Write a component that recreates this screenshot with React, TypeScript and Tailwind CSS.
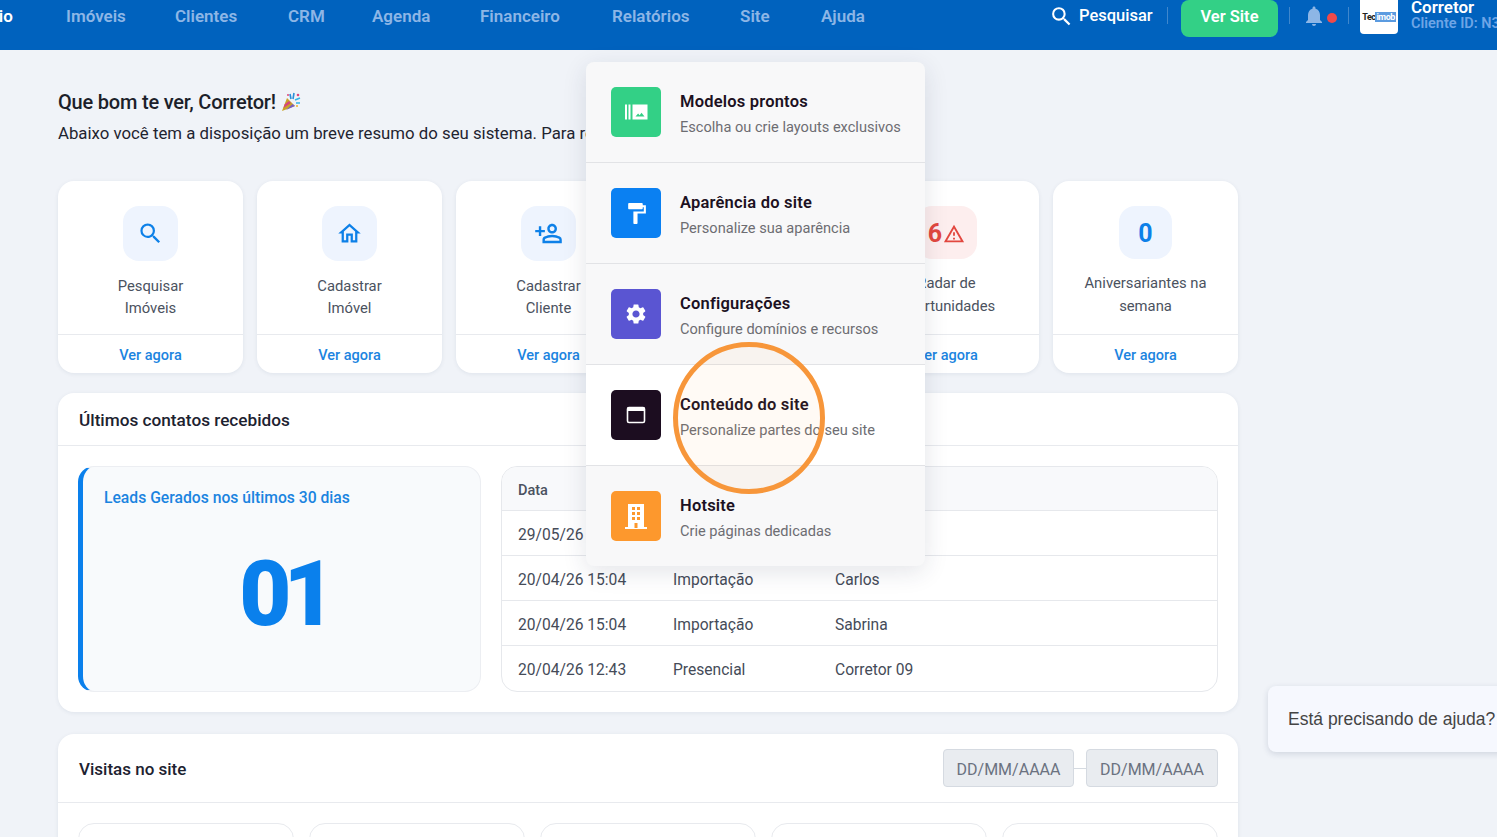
import React from "react";
import { MdSearch, MdOutlineHome, MdOutlinePersonAddAlt, MdOutlineWarningAmber, MdFormatPaint, MdSettings, MdNotifications } from "react-icons/md";

const font = "font-['Roboto',sans-serif]";

const navItems = [
  ["Imóveis", "w-[60px] mr-[49px]"],
  ["Clientes", "w-[63px] mr-[50px]"],
  ["CRM", "w-[34px] mr-[50px]"],
  ["Agenda", "w-[58px] mr-[50px]"],
  ["Financeiro", "w-[82px] mr-[50px]"],
  ["Relatórios", "w-[78px] mr-[50px]"],
  ["Site", "w-[31px] mr-[50px]"],
  ["Ajuda", "w-[44px]"],
];

function Party() {
  return (
    <svg width="20" height="20" viewBox="0 0 20 20" className="ml-[5px]">
      <path d="M1 19 L6 6 L14 14 Z" fill="#c9a227" />
      <path d="M3.6 12.5 L8 9 L10 11 L2.4 16 Z" fill="#d6457a" />
      <path d="M5 18 L11.5 12 L14 14 Z" fill="#7a5fc0" />
      <path d="M9 2 l1 5 M13 1 l-1 6" stroke="#2b8fd8" strokeWidth="1.6" />
      <path d="M14 8 l5 -2 M15 11 l4 0" stroke="#35b5e5" strokeWidth="1.6" />
      <circle cx="17" cy="3" r="1.3" fill="#e0457b" />
      <circle cx="7" cy="3" r="1" fill="#e0457b" />
      <circle cx="16" cy="14" r="1" fill="#f0b429" />
    </svg>
  );
}

function QuickCard({ icon, big, label, danger }: { icon: React.ReactNode; big?: boolean; label: string[]; danger?: boolean }) {
  return (
    <div className="h-[192px] bg-white rounded-2xl shadow-[0_1px_4px_rgba(30,50,90,0.08)] flex flex-col">
      <div className="h-[154px] border-b border-[#e8eaee] flex flex-col items-center pt-[25px]">
        <div className={`flex items-center justify-center rounded-2xl ${big ? "h-[53px] pt-[3px]" : "h-[55px] w-[55px]"} ${big && danger ? "w-[61px]" : ""} ${big && !danger ? "w-[53px]" : ""} ${danger ? "bg-[#fdeeee]" : "bg-[#eef4fe]"}`}>{icon}</div>
        <div className={`text-[14.8px] text-[#4b5260] text-center ${big ? "mt-[13px] leading-[23px]" : "mt-[14px] leading-[22px]"}`}>
          {label.map((l) => (
            <div key={l} className="whitespace-nowrap">{l}</div>
          ))}
        </div>
      </div>
      <div className="flex-1 flex items-center justify-center pt-[3px] text-[14.5px] font-medium text-[#1b84e0]">Ver agora</div>
    </div>
  );
}

function MenuRow({ color, icon, title, sub, active }: { color: string; icon: React.ReactNode; title: string; sub: string; active?: boolean }) {
  return (
    <div className={`h-[101px] flex items-center pl-[25px] gap-[19px] border-b border-[#e2e3e6] last:border-transparent ${active ? "bg-white" : ""}`}>
      <div className={`w-[50px] h-[50px] rounded-[5px] flex items-center justify-center ${color}`}>{icon}</div>
      <div className="pt-[3px]">
        <div className="text-[16.5px] leading-[22px] font-semibold text-[#1c1122] tracking-[0.2px]">{title}</div>
        <div className="text-[14.6px] leading-[20px] mt-[4px] text-[#6d6d72]">{sub}</div>
      </div>
    </div>
  );
}

const rows = [
  ["29/05/26 10:12", "Site", "Cliente"],
  ["20/04/26 15:04", "Importação", "Carlos"],
  ["20/04/26 15:04", "Importação", "Sabrina"],
  ["20/04/26 12:43", "Presencial", "Corretor 09"],
];

export default function App() {
  return (
    <div className={`relative w-[1497px] h-[837px] overflow-hidden bg-[#f0f3f8] ${font}`}>
      <header className="h-[50px] bg-[#0062be] flex items-start whitespace-nowrap">
        <div className="h-[33px] flex items-center -ml-[29px] w-[1081px] shrink-0">
          <span className="text-[17px] font-semibold text-white w-[45px] mr-[50px]">Início</span>
          {navItems.map(([n, c]) => (
            <span key={n} className={`text-[17px] font-semibold text-[#8db6e6] ${c}`}>{n}</span>
          ))}
        </div>
        <div className="flex items-start shrink-0">
          <div className="h-[33px] flex items-center w-[115px] shrink-0">
            <MdSearch className="text-white text-[25px] -ml-[3px]" />
            <span className="text-[16.5px] font-medium text-white ml-[5px]">Pesquisar</span>
          </div>
          <div className="w-px h-[17px] mt-[7px] bg-[#3f87cd] shrink-0" />
          <div className="ml-[13px] w-[97px] h-[37px] pb-[2px] bg-[#33d086] text-white text-[16.5px] font-semibold flex items-center justify-center rounded-lg shrink-0">Ver Site</div>
          <div className="ml-[11px] w-px h-[17px] mt-[7px] bg-[#3f87cd] shrink-0" />
          <MdNotifications className="text-[#8db6e6] text-[24px] ml-[12px] mt-[4px] shrink-0" />
          <div className="w-[10px] h-[10px] rounded-full bg-[#f04a4a] ml-[1px] mt-[13px] shrink-0" />
          <div className="ml-[11px] w-px h-[17px] mt-[7px] bg-[#3f87cd] shrink-0" />
          <div className="ml-[11px] w-[38px] h-[34px] bg-white rounded-b-[4px] flex flex-col items-center justify-center shrink-0">
            <div className="flex items-center text-[9px] font-bold leading-[10px] tracking-[-0.5px]">
              <span className="text-[#222]">Tec</span>
              <span className="bg-[#5b9be0] text-white px-[1px]">imob</span>
            </div>
          </div>
          <div className="ml-[13px] -mt-[2px] shrink-0">
            <div className="text-[17px] leading-[18px] font-semibold text-white">Corretor</div>
            <div className="text-[14.5px] leading-[16px] font-semibold text-[#6ea5e6]">Cliente ID: N3</div>
          </div>
        </div>
      </header>

      <main className="ml-[58px] w-[1180px] pt-[40px]">
        <div className="flex items-center h-[24px]">
          <h1 className="text-[20px] font-medium text-[#1c1f2a] tracking-[-0.2px]">Que bom te ver, Corretor!</h1>
          <Party />
        </div>
        <p className="mt-[7px] text-[16.8px] leading-[24px] text-[#1f2430] whitespace-nowrap">Abaixo você tem a disposição um breve resumo do seu sistema. Para relatórios completos acesse o menu.</p>

        <div className="mt-[36px] grid grid-cols-6 gap-x-[14px]">
          <QuickCard icon={<MdSearch className="text-[#0d80e8] text-[27px]" />} label={["Pesquisar", "Imóveis"]} />
          <QuickCard icon={<MdOutlineHome className="text-[#0d80e8] text-[27px]" />} label={["Cadastrar", "Imóvel"]} />
          <QuickCard icon={<MdOutlinePersonAddAlt className="text-[#0d80e8] text-[29px] -scale-x-100" />} label={["Cadastrar", "Cliente"]} />
          <QuickCard big icon={<span className="text-[25px] font-bold text-[#0d80e8]">0</span>} label={["Contratos", "vencendo"]} />
          <QuickCard big danger icon={<span className="flex items-center text-[#e2473f]"><span className="text-[25px] font-bold">6</span><MdOutlineWarningAmber className="text-[22px] ml-[1px]" /></span>} label={["Radar de", "Oportunidades"]} />
          <QuickCard big icon={<span className="text-[25px] font-bold text-[#0d80e8]">0</span>} label={["Aniversariantes na", "semana"]} />
        </div>

        <section className="mt-[20px] h-[319px] bg-white rounded-2xl shadow-[0_1px_4px_rgba(30,50,90,0.08)]">
          <div className="h-[53px] px-[21px] pt-[3px] flex items-center border-b border-[#e8eaee] text-[17.2px] font-medium text-[#1d2230]">Últimos contatos recebidos</div>
          <div className="pt-[20px] px-[20px] flex gap-[20px]">
            <div className="w-[403px] h-[226px] bg-[#f8fafc] rounded-2xl border border-[#eceef2] border-l-[5px] border-l-[#0a80ec] pl-[21px] pt-[21px]">
              <div className="text-[15.7px] leading-[20px] font-medium text-[#1b84e0]">Leads Gerados nos últimos 30 dias</div>
              <div className="mt-[33px] -ml-[17px] text-center text-[90px] leading-[108px] font-black tracking-[-8px] text-[#0a80ec]">01</div>
            </div>
            <div className="flex-1 h-[226px] rounded-2xl border border-[#e6e8ec] overflow-hidden">
              <div className="h-[44px] pt-[4px] bg-[#f8f9fb] border-b border-[#e6e8ec] flex items-center pl-[16px] text-[14.5px] font-medium text-[#4b5260]">Data</div>
              {rows.map((r, i) => (
                <div key={i} className={`h-[45px] pt-[5px] flex items-center pl-[16px] text-[15.6px] text-[#454b58] ${i < 3 ? "border-b border-[#e6e8ec]" : ""}`}>
                  <span className="w-[155px]">{r[0]}</span>
                  <span className="w-[162px]">{r[1]}</span>
                  <span>{r[2]}</span>
                </div>
              ))}
            </div>
          </div>
        </section>

        <section className="mt-[22px] h-[200px] bg-white rounded-2xl shadow-[0_1px_4px_rgba(30,50,90,0.08)]">
          <div className="h-[69px] pl-[21px] pr-[20px] flex items-center border-b border-[#e8eaee]">
            <span className="text-[17px] pt-[3px] font-medium text-[#1d2230] flex-1">Visitas no site</span>
            <div className="w-[131px] h-[38px] pt-[3px] rounded-[4px] bg-[#e9ecf0] border border-[#d5dae1] flex items-center justify-center text-[16px] text-[#6b7280]">DD/MM/AAAA</div>
            <div className="w-[12px] h-px bg-[#d5dae1]" />
            <div className="w-[132px] h-[38px] pt-[3px] rounded-[4px] bg-[#e9ecf0] border border-[#d5dae1] flex items-center justify-center text-[16px] text-[#6b7280]">DD/MM/AAAA</div>
          </div>
          <div className="pt-[20px] px-[20px] grid grid-cols-5 gap-[15px]">
            {[0, 1, 2, 3, 4].map((i) => (
              <div key={i} className="h-[100px] rounded-2xl border border-[#e8eaee]" />
            ))}
          </div>
        </section>
      </main>

      {/* dropdown menu */}
      <div className="absolute left-[586px] top-[62px] w-[339px] h-[504px] bg-[#f8f8f9] rounded-lg shadow-[0_6px_24px_rgba(30,40,70,0.12)] overflow-hidden">
        <MenuRow
          color="bg-[#33d086]"
          title="Modelos prontos"
          sub="Escolha ou crie layouts exclusivos"
          icon={
            <svg width="24" height="24" viewBox="0 0 24 24" fill="white">
              <rect x="1" y="4.5" width="2" height="15" />
              <rect x="4.5" y="4.5" width="2" height="15" />
              <path d="M8.5 4.5h15v15h-15z" />
              <path d="M11.5 16.5l2.6-3 1.6 1.8 1.8-2.6 3 3.8z" fill="#33d086" />
            </svg>
          }
        />
        <MenuRow color="bg-[#0a80f2]" title="Aparência do site" sub="Personalize sua aparência" icon={<MdFormatPaint className="text-white text-[25px]" />} />
        <MenuRow color="bg-[#5a55d2]" title="Configurações" sub="Configure domínios e recursos" icon={<MdSettings className="text-white text-[24px]" />} />
        <MenuRow
          active
          color="bg-[#1c0d20]"
          title="Conteúdo do site"
          sub="Personalize partes do seu site"
          icon={
            <svg width="24" height="24" viewBox="0 0 24 24" fill="none">
              <rect x="3.5" y="4.5" width="17" height="15" rx="1.5" stroke="white" strokeWidth="1.6" />
              <rect x="3.5" y="4.5" width="17" height="3.5" fill="white" />
            </svg>
          }
        />
        <MenuRow
          color="bg-[#fd982d]"
          title="Hotsite"
          sub="Crie páginas dedicadas"
          icon={
            <svg width="24" height="28" viewBox="0 0 24 28" fill="white">
              <path d="M4 2h16v23H4z" />
              <path d="M1 25h22v2H1z" />
              <g fill="#fd982d">
                <rect x="8" y="5" width="3" height="3" /><rect x="13" y="5" width="3" height="3" />
                <rect x="8" y="10" width="3" height="3" /><rect x="13" y="10" width="3" height="3" />
                <rect x="8" y="15" width="3" height="3" /><rect x="13" y="15" width="3" height="3" />
                <rect x="10.5" y="21" width="3" height="5" />
              </g>
            </svg>
          }
        />
      </div>

      {/* highlight circle */}
      <div className="absolute left-[673px] top-[342px] w-[152px] h-[152px] rounded-full border-[5px] border-[#f7963a] bg-[#f7963a]/5" />

      {/* help bubble */}
      <div className="absolute left-[1268px] top-[686px] w-[260px] h-[66px] bg-[#f6f8fe] rounded-lg shadow-[0_2px_6px_rgba(30,50,90,0.15)] flex items-center pl-[20px] font-['Liberation_Sans',sans-serif] text-[17.5px] text-[#444] whitespace-nowrap">
        Está precisando de ajuda?
      </div>
    </div>
  );
}
